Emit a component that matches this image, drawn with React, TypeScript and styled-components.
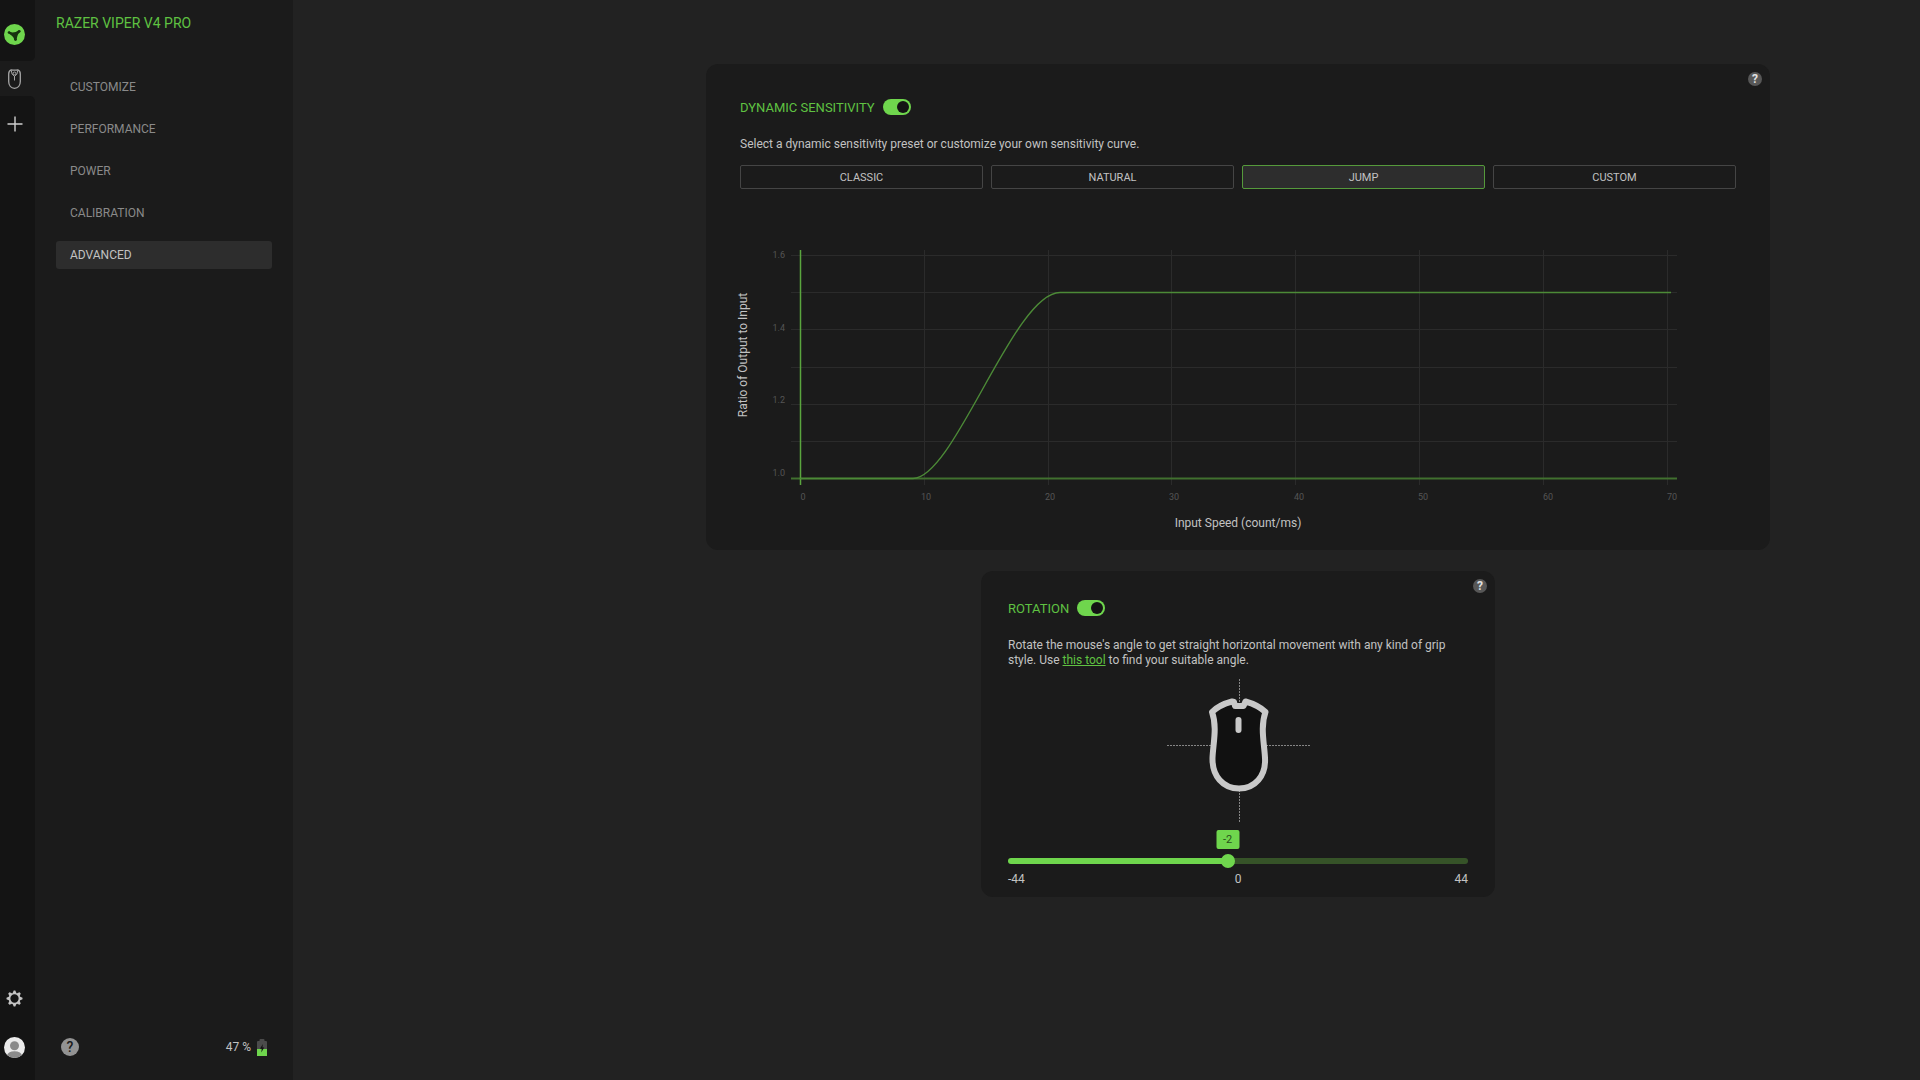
import React, { useId, useState } from "react";
import styled, { createGlobalStyle } from "styled-components";

const color = {
  page: "#222222",
  panel: "#1b1b1b",
  rail: "#141414",
  raised: "#2d2d2d",
  line: "#454545",
  green: "#6fd64d",
  greenText: "#5fc242",
  greenDim: "#365328",
  text: "#c2c2c2",
  muted: "#8a8a8a",
  axis: "#555555",
};

const GlobalStyle = createGlobalStyle`
  * { box-sizing: border-box; }
  body {
    margin: 0;
    background: ${color.page};
    color: ${color.text};
    font: 12px/15px Roboto, "Liberation Sans", sans-serif;
  }
  button {
    padding: 0;
    border: 0;
    background: none;
    color: inherit;
    font: inherit;
    cursor: pointer;
  }
`;

const Shell = styled.div`
  display: flex;
  min-height: 100vh;
`;

/* ---------- Icon rail ---------- */

const Rail = styled.nav`
  display: flex;
  flex-direction: column;
  width: 35px;
  flex-shrink: 0;
  background: ${color.panel};
`;

const RailTop = styled.div`
  display: flex;
  height: 61px;
  padding: 24px 6px 0 4px;
  background: ${color.rail};
  border-bottom-right-radius: 5px;
`;

const RailActive = styled.div`
  display: flex;
  align-items: center;
  height: 35px;
  padding: 0 6px 0 4px;
`;

const RailBottom = styled.div`
  display: flex;
  flex: 1;
  flex-direction: column;
  padding: 17px 6px 22px 4px;
  background: ${color.rail};
  border-top-right-radius: 5px;
`;

const RailSpacer = styled.div`
  flex: 1;
`;

const RailButton = styled.button<{ $gap?: number }>`
  display: flex;
  align-items: center;
  justify-content: center;
  width: 21px;
  height: 21px;
  margin-bottom: ${(p) => p.$gap ?? 0}px;
`;

/* ---------- Sidebar ---------- */

const Sidebar = styled.aside`
  display: flex;
  flex-direction: column;
  width: 258px;
  flex-shrink: 0;
  padding: 13px 21px 24px;
  background: ${color.panel};
`;

const DeviceName = styled.h1`
  margin: 0 0 40px;
  color: ${color.greenText};
  font-size: 14px;
  font-weight: 400;
  line-height: 20px;
`;

const Tabs = styled.div`
  display: flex;
  flex: 1;
  flex-direction: column;
  gap: 14px;
`;

const Tab = styled.button<{ $active: boolean }>`
  height: 28px;
  padding: 0 14px;
  border-radius: 3px;
  background: ${(p) => (p.$active ? color.raised : "transparent")};
  color: ${(p) => (p.$active ? color.text : color.muted)};
  text-align: left;
`;

const StatusBar = styled.footer`
  display: flex;
  align-items: center;
  justify-content: space-between;
  padding: 0 5px;
`;

const Battery = styled.div`
  display: flex;
  align-items: center;
  gap: 6px;
`;

const HelpButton = styled.button<{ $size: number }>`
  display: flex;
  align-items: center;
  justify-content: center;
  width: ${(p) => p.$size}px;
  height: ${(p) => p.$size}px;
  border-radius: 50%;
  background: ${(p) => (p.$size > 16 ? "#939393" : "#575757")};
  color: ${(p) => (p.$size > 16 ? color.panel : "#e0e0e0")};
  font-size: ${(p) => (p.$size > 16 ? 14 : 12)}px;
  font-weight: ${(p) => (p.$size > 16 ? 500 : 700)};
  line-height: ${(p) => p.$size}px;
`;

/* ---------- Content ---------- */

const Content = styled.main`
  display: flex;
  flex: 1;
  flex-direction: column;
  align-items: center;
  gap: 21px;
  min-width: 0;
  padding: 64px 0 64px 263px;
`;

const Card = styled.section<{ $width: number; $pad: string }>`
  position: relative;
  width: 100%;
  max-width: ${(p) => p.$width}px;
  padding: ${(p) => p.$pad};
  border-radius: 12px;
  background: ${color.panel};
`;

const CornerHelp = styled(HelpButton)`
  position: absolute;
  top: 8px;
  right: 8px;
`;

const CardHeader = styled.label`
  display: flex;
  align-items: center;
  gap: 8px;
  width: max-content;
  height: 20px;
  margin-bottom: 20px;
`;

const CardTitle = styled.span`
  color: ${color.greenText};
  font-size: 13px;
`;

const Toggle = styled.input`
  appearance: none;
  display: flex;
  align-items: center;
  width: 28px;
  height: 16px;
  margin: 0;
  padding: 2px;
  border-radius: 8px;
  background: #555;
  cursor: pointer;

  &::before {
    content: "";
    width: 12px;
    height: 12px;
    border-radius: 50%;
    background: ${color.rail};
  }

  &:checked {
    justify-content: flex-end;
    background: ${color.green};
  }
`;

const Description = styled.p`
  margin: 0;
`;

const ToolLink = styled.a`
  color: ${color.greenText};
  text-decoration: underline;
`;

const Presets = styled.div`
  display: grid;
  grid-template-columns: repeat(4, 1fr);
  gap: 8px;
  margin: 13px 0 51px;
`;

const Preset = styled.button<{ $active: boolean }>`
  height: 24px;
  border: 1px solid ${(p) => (p.$active ? "#559a3b" : color.line)};
  border-radius: 2px;
  background: ${(p) => (p.$active ? color.raised : "transparent")};
  font-size: 11px;
`;

const Chart = styled.svg`
  display: block;
  width: calc(100% + 8px);
  height: auto;
  margin-left: -8px;
  font-size: 12px;
`;

const TickLabel = styled.text`
  fill: ${color.axis};
  font-size: 9px;
`;

const AxisTitle = styled.text`
  fill: ${color.text};
  text-anchor: middle;
`;

const Diagram = styled.svg`
  display: block;
  width: 144px;
  height: 144px;
  margin: 10px auto 8px;
`;

const Slider = styled.div`
  position: relative;
  padding-top: 24px;
`;

const SliderTrack = styled.input<{ $fill: number }>`
  appearance: none;
  display: block;
  width: 100%;
  height: 14px;
  margin: 0;
  background: transparent;
  cursor: pointer;

  &::-webkit-slider-runnable-track {
    height: 6px;
    border-radius: 3px;
    background: linear-gradient(
      to right,
      ${color.green} ${(p) => p.$fill}%,
      ${color.greenDim} ${(p) => p.$fill}%
    );
  }

  &::-webkit-slider-thumb {
    appearance: none;
    width: 14px;
    height: 14px;
    margin-top: -4px;
    border-radius: 50%;
    background: ${color.green};
  }
`;

const SliderValue = styled.output`
  position: absolute;
  top: 0;
  width: 23px;
  height: 19px;
  transform: translateX(-50%);
  border-radius: 2px;
  background: ${color.green};
  color: #28501b;
  font-size: 11px;
  line-height: 19px;
  text-align: center;
`;

const SliderScale = styled.div`
  display: grid;
  grid-template-columns: 1fr auto 1fr;
  margin-top: 4px;

  span:last-child {
    text-align: right;
  }
`;

/* ---------- Icons ---------- */

const LogoIcon = () => (
  <svg width="21" height="21" viewBox="0 0 21 21">
    <circle cx="10.5" cy="10.5" r="10.5" fill={color.green} />
    <g fill="#17330f">
      <path d="M5 7.6 8.5 8.6Q12 8.6 14.6 6.3L16 8.3Q13.8 10 13.4 12L12.4 16H10.4L9.6 13.8Q8 11.4 4.800 9.400Z" />
      <circle cx="5" cy="8.5" r="1.3" />
      <circle cx="15.3" cy="7.3" r="1.3" />
      <circle cx="11.5" cy="15.6" r="1.4" />
    </g>
  </svg>
);

const MouseIcon = () => (
  <svg width="13" height="20" viewBox="0 0 13 20" fill="none" stroke="#a5a5a5" strokeWidth="1.3">
    <path d="M3.2 .9Q6.5 1.5 9.8 .9 12.3 2 12.3 5V12.5C12.3 16.5 9.9 19.3 6.5 19.3S.7 16.5 .7 12.5V5Q.7 2 3.2 .9Z" />
    <path d="M3.3 1.5Q3.3 6 6.5 7.3 9.7 6 9.7 1.5M6.5 7V11.5" strokeWidth="1" />
    <circle cx="6.5" cy="4.4" r="1.4" strokeWidth="1" />
  </svg>
);

const PlusIcon = () => (
  <svg width="16" height="16" viewBox="0 0 16 16" stroke="#d0d0d0" strokeWidth="1.4">
    <path d="M8 .5v15M.5 8h15" />
  </svg>
);

const GearIcon = () => (
  <svg width="17" height="17" viewBox="-8.5 -8.5 17 17" fill="none">
    <circle r="5" stroke="#c4c4c4" strokeWidth="1.7" />
    {[0, 45, 90, 135, 180, 225, 270, 315].map((angle) => (
      <path key={angle} d="M-2-5.300-.8-8H.8L2-5.300Z" fill="#c4c4c4" transform={`rotate(${angle})`} />
    ))}
  </svg>
);

const AvatarIcon = () => {
  const clip = useId();
  return (
    <svg width="21" height="21" viewBox="0 0 21 21">
      <clipPath id={clip}>
        <circle cx="10.5" cy="10.5" r="10.5" />
      </clipPath>
      <g clipPath={`url(#${clip})`}>
        <rect width="21" height="21" fill="#ececec" />
        <circle cx="10.5" cy="8.8" r="4.5" fill="#8b8b8b" />
        <ellipse cx="10.5" cy="19" rx="7.5" ry="4.8" fill="#8b8b8b" />
      </g>
    </svg>
  );
};

const BatteryIcon = () => (
  <svg width="10" height="17" viewBox="0 0 10 17">
    <path d="M0 3q0-1 1-1h1.500V1q0-1 1-1h3q1 0 1 1v1H9q1 0 1 1v7H0z" fill="#4b4b4b" />
    <path d="M0 10h10v7H0z" fill={color.green} />
    <path d="M5.800 5 3 9.800H4.700L4.300 13.500 7.200 8.600H5.500z" fill="#131313" />
  </svg>
);

/* ---------- Panels ---------- */

const GRID_X = [184.5, 308.5, 431.5, 555.5, 679.5, 803.5, 927.5];
const GRID_Y = [15.5, 52.5, 89.5, 127.5, 164.5, 201.5];
const RATIOS = [
  { label: "1.6", y: 18 },
  { label: "1.4", y: 91 },
  { label: "1.2", y: 163 },
  { label: "1.0", y: 236 },
];
const SPEEDS = [
  { label: "0", x: 63 },
  { label: "10", x: 186 },
  { label: "20", x: 310 },
  { label: "30", x: 434 },
  { label: "40", x: 559 },
  { label: "50", x: 683 },
  { label: "60", x: 808 },
  { label: "70", x: 932 },
];

const SensitivityChart = () => (
  <Chart viewBox="-8 0 1004 294" role="img" aria-label="Ratio of output to input by input speed">
    <g stroke="#2b2b2b">
      {GRID_Y.map((y) => (
        <path key={y} d={`M51 ${y}H937`} />
      ))}
      {GRID_X.map((x) => (
        <path key={x} d={`M${x} 10V245`} />
      ))}
    </g>
    <g fill="none">
      <path d="M51 238.5H937" stroke="#41702f" strokeWidth="2" />
      <path d="M60.5 10V245" stroke="#5aa53e" strokeWidth="1.5" />
      <path
        d="M60 238.5H173C214 238.5 274 52.5 320 52.5H931"
        stroke="#4c8a37"
        strokeWidth="1.4"
      />
    </g>
    {RATIOS.map(({ label, y }) => (
      <TickLabel key={label} x={45} y={y} textAnchor="end">
        {label}
      </TickLabel>
    ))}
    {SPEEDS.map(({ label, x }) => (
      <TickLabel key={label} x={x} y={260} textAnchor="middle">
        {label}
      </TickLabel>
    ))}
    <AxisTitle transform="translate(7 115) rotate(-90)">Ratio of Output to Input</AxisTitle>
    <AxisTitle x={498} y={287}>
      Input Speed (count/ms)
    </AxisTitle>
  </Chart>
);

const RotationDiagram = ({ angle }: { angle: number }) => (
  <Diagram viewBox="-1 0 144 144" role="img" aria-label={`Mouse rotation ${angle} degrees`}>
    <path d="M72.5 1V144M0 67.5H143" stroke="#858585" strokeDasharray="2 1" />
    <path
      d="M67 24 65 23.500Q52 27 45 34C50.500 49 46 66 45.500 80c-.4 18 10.500 30.500 26.500 30.500S99 98 98 80c-.6-14-5-31 .5-46Q91 27 78.500 23.500L76.500 28H68Z"
      fill="#111111"
      stroke="#c9c9c9"
      strokeWidth="6"
      strokeLinejoin="round"
    />
    <path d="M71.5 42v10" stroke="#c9c9c9" strokeWidth="6" strokeLinecap="round" />
  </Diagram>
);

const TABS = ["CUSTOMIZE", "PERFORMANCE", "POWER", "CALIBRATION", "ADVANCED"];
const PRESETS = ["CLASSIC", "NATURAL", "JUMP", "CUSTOM"];

export default function App() {
  const [tab, setTab] = useState("ADVANCED");
  const [preset, setPreset] = useState("JUMP");
  const [angle, setAngle] = useState(-2);
  const percent = ((angle + 44) / 88) * 100;

  return (
    <Shell>
      <GlobalStyle />
      <Rail aria-label="Devices">
        <RailTop>
          <RailButton aria-label="Home">
            <LogoIcon />
          </RailButton>
        </RailTop>
        <RailActive>
          <RailButton aria-label="Mouse">
            <MouseIcon />
          </RailButton>
        </RailActive>
        <RailBottom>
          <RailButton aria-label="Add">
            <PlusIcon />
          </RailButton>
          <RailSpacer />
          <RailButton aria-label="Settings" $gap={28}>
            <GearIcon />
          </RailButton>
          <RailButton aria-label="Profile">
            <AvatarIcon />
          </RailButton>
        </RailBottom>
      </Rail>

      <Sidebar>
        <DeviceName>RAZER VIPER V4 PRO</DeviceName>
        <Tabs>
          {TABS.map((name) => (
            <Tab key={name} $active={name === tab} onClick={() => setTab(name)}>
              {name}
            </Tab>
          ))}
        </Tabs>
        <StatusBar>
          <HelpButton $size={18} aria-label="Help">
            ?
          </HelpButton>
          <Battery>
            47 %
            <BatteryIcon />
          </Battery>
        </StatusBar>
      </Sidebar>

      <Content>
        <Card $width={1064} $pad="33px 34px 16px">
          <CornerHelp $size={14} aria-label="Dynamic sensitivity help">
            ?
          </CornerHelp>
          <CardHeader>
            <CardTitle>DYNAMIC SENSITIVITY</CardTitle>
            <Toggle type="checkbox" defaultChecked />
          </CardHeader>
          <Description>
            Select a dynamic sensitivity preset or customize your own sensitivity curve.
          </Description>
          <Presets>
            {PRESETS.map((name) => (
              <Preset key={name} $active={name === preset} onClick={() => setPreset(name)}>
                {name}
              </Preset>
            ))}
          </Presets>
          <SensitivityChart />
        </Card>

        <Card $width={514} $pad="27px 27px 10px">
          <CornerHelp $size={14} aria-label="Rotation help">
            ?
          </CornerHelp>
          <CardHeader>
            <CardTitle>ROTATION</CardTitle>
            <Toggle type="checkbox" defaultChecked />
          </CardHeader>
          <Description>
            Rotate the mouse's angle to get straight horizontal movement with any kind of grip style.
            Use <ToolLink href="#angle-tool">this tool</ToolLink> to find your suitable angle.
          </Description>
          <RotationDiagram angle={angle} />
          <Slider>
            <SliderValue style={{ left: `${percent}%` }}>{angle}</SliderValue>
            <SliderTrack
              type="range"
              min={-44}
              max={44}
              value={angle}
              $fill={percent}
              aria-label="Rotation angle"
              onChange={(event) => setAngle(Number(event.target.value))}
            />
            <SliderScale>
              <span>-44</span>
              <span>0</span>
              <span>44</span>
            </SliderScale>
          </Slider>
        </Card>
      </Content>
    </Shell>
  );
}
